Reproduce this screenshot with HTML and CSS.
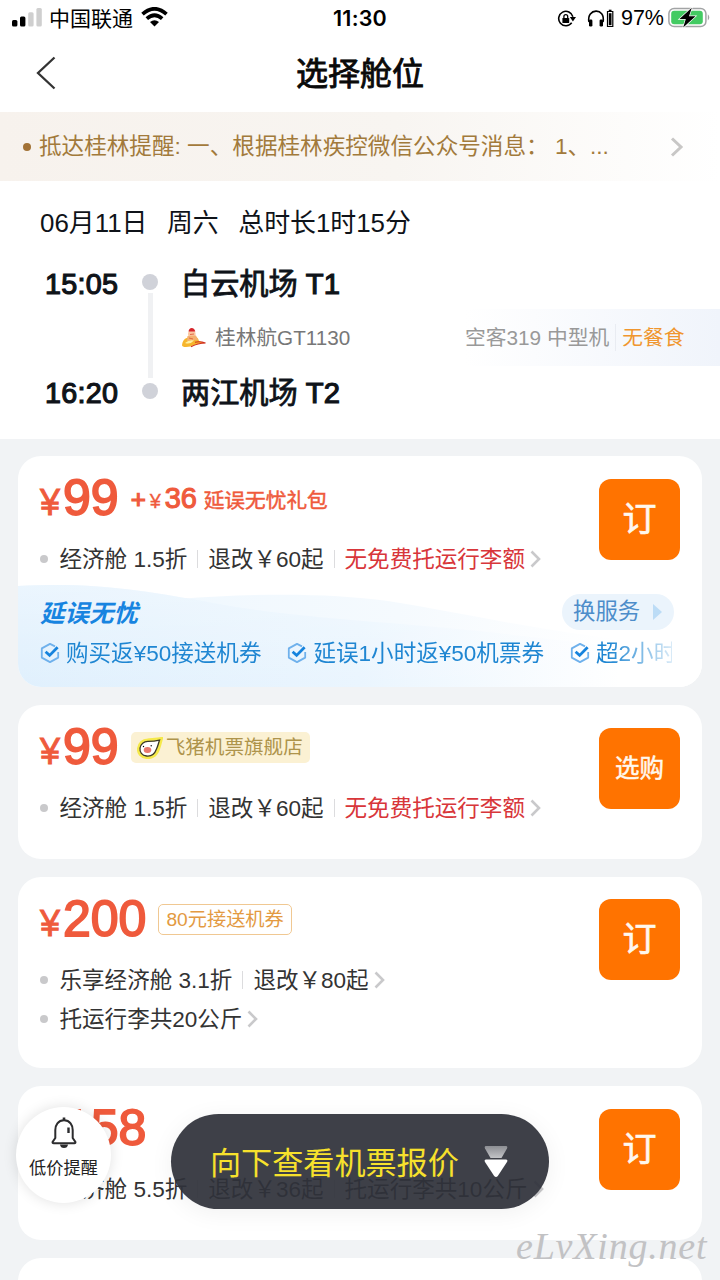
FILE: index.html
```html
<!DOCTYPE html>
<html lang="zh-CN">
<head>
<meta charset="utf-8">
<title>选择舱位</title>
<link rel="stylesheet" href="styles.css">
</head>
<body>
<svg width="0" height="0" class="defs">
  <symbol id="chev" viewBox="0 0 11 18"><path d="M1.5 1.5 L9 9 L1.5 16.5" fill="none" stroke="#c9c9cb" stroke-width="2.6"/></symbol>
  <symbol id="check" viewBox="0 0 20 20"><path d="M15 3.4 L10 .9 L1.8 5.4 V14.6 L10 19.1 L18.2 14.6 V9" fill="none" stroke="#6fb1ec" stroke-width="1.8" stroke-linejoin="round"/><path d="M5.6 8.8 L9.6 12.4 L17.6 4.2" fill="none" stroke="#1683dd" stroke-width="2.8"/></symbol>
</svg>
<div class="screen">
  <div class="status">
    <div class="status-left">
      <svg class="signal" width="31" height="19" viewBox="0 0 31 19"><rect x="0" y="12" width="5.4" height="6.6" rx="1.5"/><rect x="8" y="8.5" width="5.4" height="10" rx="1.5"/><rect x="16.2" y="4.3" width="5.4" height="14.3" rx="1.5" fill="#cfcfcf"/><rect x="24.4" y="0" width="5.4" height="18.6" rx="1.5" fill="#cfcfcf"/></svg>
      <span class="carrier">中国联通</span>
      <svg class="wifi" width="27" height="20" viewBox="0 0 27 20"><g fill="none" stroke="#000" stroke-width="3.7"><path d="M1.5 7.2 Q13.5 -3.6 25.5 7.2"/><path d="M5.8 11.7 Q13.5 4.9 21.2 11.7"/></g><path d="M13.5 19.5 L9 15.1 Q13.5 11.4 18 15.1 Z"/></svg>
    </div>
    <div class="clock">11:30</div>
    <div class="status-right">
      <svg width="20" height="18" viewBox="0 0 20 18"><path d="M14.7 12.8 A7.2 7.2 0 1 1 15.9 6.8" fill="none" stroke="#000" stroke-width="1.6"/><path d="M12.8 7 H19 L15.9 11.4 Z"/><rect x="5.4" y="7.9" width="6.8" height="5.2" rx=".7"/><path d="M6.9 8 V6.5 a1.9 1.9 0 0 1 3.8 0 V8" fill="none" stroke="#000" stroke-width="1.3"/></svg>
      <svg class="phones" width="27" height="19" viewBox="0 0 27 19"><path d="M2 13 C-1 -1 19 -2 16 13" fill="none" stroke="#000" stroke-width="1.6"/><rect x="2" y="10.5" width="3.4" height="7" rx="1.3"/><rect x="12.6" y="10.5" width="3.4" height="7" rx="1.3"/><path d="M20.5 2.5 H25.8 V17.5 H20.5 Z" fill="none" stroke="#000" stroke-width="1.2"/><rect x="21.8" y="4.2" width="2.7" height="12"/><rect x="21.8" y=".7" width="2.7" height="1.8"/></svg>
      <span class="pct">97%</span>
      <svg class="battery" width="43" height="22" viewBox="0 0 43 22"><rect x=".9" y="1.4" width="37" height="18.2" rx="5.2" fill="#fff" stroke="#a2a4a5" stroke-width="1.5"/><rect x="3.2" y="3.7" width="31.6" height="13.6" rx="3" fill="#43cb62"/><path d="M39.8 7.3 Q42.8 10.4 39.8 13.6 Z" fill="#a2a4a5"/><path d="M23.8 .8 L11.5 12 H17.8 L15.2 20.6 L27.5 9.2 H21 Z" fill="#000" stroke="#fff" stroke-width="1.4" paint-order="stroke"/></svg>
    </div>
  </div>

  <div class="nav">
    <svg class="back" width="20" height="34" viewBox="0 0 20 34"><path d="M18.5 1.5 L2 17 L18.5 32.5" fill="none" stroke="#333" stroke-width="2.3"/></svg>
    <h1 class="title">选择舱位</h1>
  </div>

  <div class="notice">
    <i class="notice-dot"></i>
    <span class="notice-text">抵达桂林提醒: 一、根据桂林疾控微信公众号消息：&nbsp;1、...</span>
    <svg width="14" height="20" viewBox="0 0 14 20"><path d="M2 1.5 L11 10 L2 18.5" fill="none" stroke="#c8c7c6" stroke-width="3"/></svg>
  </div>

  <div class="flight">
    <div class="date"><span>06月11日</span><span>周六</span><span>总时长1时15分</span></div>
    <div class="leg">
      <div class="times"><span>15:05</span><span>16:20</span></div>
      <div class="track"><i class="stop"></i><i class="line"></i><i class="stop"></i></div>
      <div class="places">
        <div class="airport">白云机场 <span class="terminal">T1</span></div>
        <div class="plane">
          <svg width="26" height="22" viewBox="0 0 26 22"><path d="M1 18 C2 11 6 11 8 10 C14 8 17 10 18 14 L24.5 16.5 C17 15 12 20 5 20 Q1 20 1 18Z" fill="#f6b52c"/><path d="M14 15.2 Q19 14 24.5 16 Q17 16 10 19.8" fill="none" stroke="#cf2d20" stroke-width="1.1"/><circle cx="10.8" cy="7" r="3.8" fill="#fbc6a0"/><path d="M7.5 4.6 Q8 1 10.7 1 Q13.5 1 14.3 4.6 Z" fill="#d6242a"/><path d="M6.5 9 L15 8.5 L17 13 L6 14 Z" fill="#f4b070"/><path d="M9 7.5 L13 7 M8 11 L12 12" stroke="#e0603a" stroke-width=".9"/><path d="M4 16 Q8 12.5 13 13.5 Q9 18 4 16Z" fill="#fff0a0"/></svg>
          <span class="flight-no">桂林航GT1130</span>
          <div class="meal"><span>空客319 中型机</span><i></i><em>无餐食</em></div>
        </div>
        <div class="airport">两江机场 <span class="terminal">T2</span></div>
      </div>
    </div>
  </div>

  <div class="list">
    <section class="card">
      <div class="offer">
        <div class="info">
          <div class="price"><span class="yen">¥</span><span class="amount">99</span>
            <span class="addon"><span class="plus">+</span><span class="small-yen">¥</span><span class="addon-num">36</span><span class="addon-name">延误无忧礼包</span></span></div>
          <div class="detail"><i class="dot"></i><span>经济舱 1.5折</span><i class="sep"></i><span>退改￥60起</span><i class="sep"></i><span class="red">无免费托运行李额</span><svg class="chev"><use href="#chev"/></svg></div>
        </div>
        <div class="book">订</div>
      </div>
      <div class="service">
        <svg class="waves" width="684" height="102" viewBox="0 0 684 102">
          <defs>
            <linearGradient id="w1" gradientUnits="userSpaceOnUse" x1="0" x2="684" y1="0" y2="0"><stop offset="0" stop-color="#e0f0fd"/><stop offset=".5" stop-color="#eaf5fe"/><stop offset=".88" stop-color="#fff"/></linearGradient>
            <linearGradient id="w2" gradientUnits="userSpaceOnUse" x1="160" x2="600" y1="0" y2="0"><stop offset="0" stop-color="#f0f8fe"/><stop offset=".5" stop-color="#f5fafe"/><stop offset="1" stop-color="#fff"/></linearGradient>
            <linearGradient id="w3" x1="0" x2="0" y1="0" y2="1"><stop offset="0" stop-color="#fff" stop-opacity=".35"/><stop offset="1" stop-color="#fff" stop-opacity="0"/></linearGradient>
          </defs>
          <path d="M160 14 C240 8 310 8 370 16 C460 30 540 52 684 62 V102 H160 Z" fill="url(#w2)"/>
          <path d="M0 1 C80 -3 130 6 200 19 C270 32 370 37 460 46 C550 56 610 64 684 68 V102 H0 Z" fill="url(#w1)"/>
          <path d="M0 1 C80 -3 130 6 200 19 C270 32 370 37 460 46 C550 56 610 64 684 68 V102 H0 Z" fill="url(#w3)"/>
        </svg>
        <div class="service-head"><span class="service-name">延误无忧</span><span class="swap">换服务<i></i></span></div>
        <div class="perks">
          <span class="perk"><svg><use href="#check"/></svg>购买返¥50接送机券</span>
          <span class="perk"><svg><use href="#check"/></svg>延误1小时返¥50机票券</span>
          <span class="perk"><svg><use href="#check"/></svg>超2小时</span>
        </div>
      </div>
    </section>

    <section class="card">
      <div class="offer">
        <div class="info">
          <div class="price"><span class="yen">¥</span><span class="amount">99</span>
            <span class="shop"><svg width="26" height="22" viewBox="0 0 26 22"><path d="M24.5 1.5 C23.5 5 23 8 21.5 12 C19 19.5 13.5 21 9.5 20.5 C4 20 1 16 1.5 11.5 C2 6.5 6 3 10.5 3 C15 2.5 20 2.5 24.5 1.5Z" fill="#fff" stroke="#f5e94a" stroke-width="3"/><path d="M22.5 3.2 C21.5 6 21 9 19.5 12 C17.5 17.5 13.5 19.5 9.5 19 C5 18.5 2.5 15 3 11.2 C3.5 7 7 4.3 11 4.4 C15 4.4 19 4 22.5 3.2Z" fill="#fff" stroke="#3c3a26" stroke-width="1.3"/><ellipse cx="10.5" cy="13" rx="3.8" ry="3" fill="#e9786d"/><circle cx="6.5" cy="9.5" r=".7"/><circle cx="14.2" cy="8.7" r=".7"/></svg>飞猪机票旗舰店</span></div>
          <div class="detail"><i class="dot"></i><span>经济舱 1.5折</span><i class="sep"></i><span>退改￥60起</span><i class="sep"></i><span class="red">无免费托运行李额</span><svg class="chev"><use href="#chev"/></svg></div>
        </div>
        <div class="book pick">选购</div>
      </div>
    </section>

    <section class="card tall">
      <div class="offer">
        <div class="info">
          <div class="price"><span class="yen">¥</span><span class="amount">200</span><span class="coupon">80元接送机券</span></div>
          <div class="detail"><i class="dot"></i><span>乐享经济舱 3.1折</span><i class="sep"></i><span>退改￥80起</span><svg class="chev"><use href="#chev"/></svg></div>
          <div class="detail"><i class="dot"></i><span>托运行李共20公斤</span><svg class="chev"><use href="#chev"/></svg></div>
        </div>
        <div class="book">订</div>
      </div>
    </section>

    <section class="card">
      <div class="offer">
        <div class="info">
          <div class="price"><span class="yen">¥</span><span class="amount">158</span></div>
          <div class="detail"><i class="dot"></i><span>经济舱 5.5折</span><i class="sep"></i><span>退改￥36起</span><i class="sep"></i><span>托运行李共10公斤</span><svg class="chev"><use href="#chev"/></svg></div>
        </div>
        <div class="book">订</div>
      </div>
    </section>
    <section class="card"></section>
  </div>

  <div class="alert">
    <svg width="26" height="32" viewBox="0 0 26 32"><path d="M13 3.3 C7 3.3 4.3 8 4.3 13 V21 L1.6 25 Q1.3 26.3 2.6 26.3 H23.4 Q24.7 26.3 24.4 25 L21.7 21 V13 C21.7 8 19 3.3 13 3.3Z" fill="none" stroke="#2c2c2e" stroke-width="2"/><path d="M17.5 10.5 V16" stroke="#2c2c2e" stroke-width="2.4"/><path d="M13 .5 V4" stroke="#2c2c2e" stroke-width="2.6"/><path d="M9 27.5 H17 Q16.5 31 13 31 Q9.5 31 9 27.5Z" fill="#2c2c2e"/></svg>
    <span>低价提醒</span>
  </div>
  <div class="more">
    <span>向下查看机票报价</span>
    <svg width="24" height="33" viewBox="0 0 24 33"><defs><linearGradient id="fade" x1="0" y1="0" x2="0" y2="1"><stop offset="0" stop-color="#8c8e93"/><stop offset="1" stop-color="#c2c3c6"/></linearGradient></defs><path d="M1.5 1 H22.5 Q24 1.5 23 3.5 L17.5 13 H6.5 L1 3.5 Q0 1.5 1.5 1Z" fill="url(#fade)"/><path d="M1.8 14.5 H22.2 Q24.2 15 23 17 L13.8 31 Q12 33 10.2 31 L1 17 Q-.2 15 1.8 14.5Z" fill="#fff"/></svg>
  </div>
  <div class="mark">eLvXing.net</div>
</div>
</body>
</html>
```
FILE: styles.css
```css
* { box-sizing: border-box; }
body {
  margin: 0;
  background: #f1f3f5;
  color: #333;
  font-family: "Liberation Sans", "Noto Sans CJK SC", sans-serif;
}
i, em { font-style: normal; }
.defs { position: absolute; }
svg { flex: none; display: block; }
.screen { position: relative; width: 720px; height: 1280px; overflow: hidden; }

.status {
  display: grid;
  grid-template-columns: 1fr auto 1fr;
  align-items: center;
  height: 37px;
  padding: 0 9px 0 12px;
  background: #fff;
  color: #000;
}
.status-left { display: flex; align-items: center; }
.signal { margin-right: 6px; margin-top: -2px; }
.carrier { font-size: 21px; line-height: 37px; }
.wifi { margin-left: 8px; margin-top: -3px; }
.clock { padding-right: 3px; font: 600 21.5px/37px Inter, sans-serif; letter-spacing: .2px; }
.status-right { display: flex; align-items: center; justify-content: flex-end; }
.phones { margin-left: 10px; }
.pct { margin-left: 7px; font-size: 21.5px; line-height: 37px; }
.battery { margin-left: 4px; margin-top: -2px; }

.nav {
  display: grid;
  grid-template-columns: 1fr auto 1fr;
  align-items: center;
  height: 75px;
  padding: 0 36px;
  background: #fff;
}
.back { margin-top: -3px; }
.title {
  margin: 0;
  font-size: 32px;
  line-height: 75px;
  font-weight: 400;
  color: #0a0a0a;
  -webkit-text-stroke: .9px #0a0a0a;
}

.notice {
  display: flex;
  align-items: center;
  height: 69px;
  padding: 0 36px 0 23px;
  background: linear-gradient(90deg, #f7f2ed, #f8f5f1 55%, #fff);
  color: #a27a3b;
  font-size: 22.6px;
}
.notice-dot { width: 8px; height: 8px; border-radius: 50%; background: #a27236; margin-right: 8px; }
.notice-text { flex: 1; padding-bottom: 4px; white-space: nowrap; }

.flight { height: 258px; padding-top: 22px; background: #fff; color: #0f1319; }
.date { display: flex; gap: 19.5px; padding-left: 40px; font-size: 25.9px; line-height: 40px; }
.leg { display: flex; margin-top: 21px; padding-left: 45px; }
.times {
  display: flex;
  flex-direction: column;
  justify-content: space-between;
  width: 97px;
  height: 149px;
  font-size: 28.7px;
  line-height: 40px;
  letter-spacing: .3px;
  -webkit-text-stroke: 1.2px currentColor;
}
.track { display: flex; flex-direction: column; align-items: center; width: 16px; padding-top: 10px; }
.stop { width: 16px; height: 16px; border-radius: 50%; background: #d0d2d9; }
.line { width: 5px; height: 85px; margin: 3px 0 5px; background: #f0f1f3; }
.places { flex: 1; padding-left: 23px; }
.airport { height: 40px; font-size: 29.2px; line-height: 40px; white-space: nowrap; -webkit-text-stroke: .8px currentColor; }
.terminal { -webkit-text-stroke: 1.2px currentColor; }
.plane { display: flex; align-items: center; height: 57px; margin: 5px 0 7px; }
.flight-no { margin-left: 8px; padding-bottom: 3px; font-size: 20.7px; color: #777; }
.meal {
  display: flex;
  align-items: center;
  height: 57px;
  width: 255px;
  margin-left: auto;
  background: linear-gradient(90deg, #fff, #f0f4fb);
  font-size: 20.75px;
  color: #999;
  white-space: nowrap;
}
.meal span, .meal em { padding-bottom: 3px; }
.meal i { width: 1px; height: 27px; margin: 0 6px; background: #e9ecf2; }
.meal em { color: #f0962f; }

.list { display: flex; flex-direction: column; gap: 18px; padding: 17px 18px 0; }
.card { height: 154px; background: #fff; border-radius: 23px; overflow: hidden; flex: none; }
.card:first-child { height: 231px; }
.card.tall { height: 191px; }
.offer { display: flex; justify-content: space-between; padding: 22px 22px 0; }
.price { display: flex; align-items: baseline; height: 61px; color: #ef5a3c; line-height: 40px; }
.yen { width: 23px; font-size: 36px; -webkit-text-stroke: .9px #ef5a3c; }
.amount { font-size: 50px; -webkit-text-stroke: 1.8px #ef5a3c; }
.addon { display: flex; align-items: baseline; align-self: flex-start; margin-left: 12px; }
.plus { width: 18px; font-size: 26px; -webkit-text-stroke: 1.2px #ef5a3c; }
.small-yen { width: 16px; padding-left: 1px; font-size: 20px; -webkit-text-stroke: .3px #ef5a3c; }
.addon-num { width: 39px; font-size: 29px; -webkit-text-stroke: 1.1px #ef5a3c; }
.addon-name { font-size: 20.7px; -webkit-text-stroke: .5px #ef5a3c; }
.detail { display: flex; align-items: center; height: 39px; font-size: 22.55px; white-space: nowrap; }
.detail span { padding-bottom: 3px; }
.info { padding-bottom: 1px; }
.dot { width: 8px; height: 8px; border-radius: 50%; background: #c9c9cb; margin-right: 11.5px; }
.sep { width: 1px; height: 18px; margin: 0 10px; background: #dcdcde; }
.red { color: #d8363a; }
.chev { width: 11px; height: 18px; margin-left: 5px; }
.book {
  width: 81px;
  height: 81px;
  margin-top: 1px;
  border-radius: 12px;
  background: #ff7300;
  color: #fff8ee;
  font-size: 34px;
  line-height: 80px;
  text-align: center;
  -webkit-text-stroke: .7px #fff8ee;
}
.pick { font-size: 24.5px; line-height: 82px; -webkit-text-stroke: .5px #fff8ee; }
.tall .book { margin-top: 0; }
.shop, .coupon { align-self: flex-start; margin-top: 5px; height: 31px; border-radius: 5px; }
.shop {
  display: flex;
  align-items: center;
  gap: 3px;
  margin-left: 12px;
  padding: 0 7px 0 6px;
  background: #fbf1d3;
  color: #ae944b;
  font-size: 19.6px;
  line-height: 31px;
}
.coupon { margin-left: 12px; padding: 0 7px; border: 1px solid #f0c892; color: #e39a42; font-size: 19.2px; line-height: 29px; }

.service { position: relative; height: 102px; margin-top: 6px; padding-top: 9px; color: #1f86d2; }
.waves { position: absolute; left: 0; top: 0; }
.service-head { position: relative; display: flex; align-items: center; justify-content: space-between; height: 36px; padding: 0 28px 0 22px; }
.service-name { padding-bottom: 2px; font-size: 24.5px; font-weight: 700; font-style: italic; color: #1784e0; }
.swap { display: flex; align-items: center; width: 112px; height: 36px; padding-left: 11px; border-radius: 18px; background: #ebf4fc; color: #4d8dca; font-size: 22.4px; line-height: 34px; }
.swap i { margin-left: 13px; border: solid transparent; border-width: 8px 0 8px 9px; border-left-color: #bcdcf6; }
.perks {
  position: relative;
  display: flex;
  gap: 26px;
  height: 46px;
  width: 632px;
  margin-left: 22px;
  overflow: hidden;
  font-size: 22.55px;
  line-height: 45px;
  white-space: nowrap;
  -webkit-mask-image: linear-gradient(90deg, #000 90%, transparent 102%);
  mask-image: linear-gradient(90deg, #000 90%, transparent 102%);
}
.perk { display: flex; flex: none; align-items: center; gap: 6px; }
.perk svg { width: 20px; height: 20px; }

.alert {
  position: absolute;
  left: 16px;
  top: 1107px;
  display: flex;
  flex-direction: column;
  align-items: center;
  width: 95px;
  height: 96px;
  padding-top: 10px;
  border-radius: 50%;
  background: #fff;
  box-shadow: 0 0 14px rgba(0, 0, 0, .12);
  color: #222;
  font-size: 17.2px;
  line-height: 38px;
}
.more {
  position: absolute;
  left: 171px;
  top: 1114px;
  display: flex;
  align-items: center;
  width: 378px;
  height: 95px;
  padding-left: 39px;
  border-radius: 48px;
  background: rgba(47, 50, 58, .93);
  box-shadow: 0 4px 24px rgba(0, 0, 0, .06);
  color: #f7e12c;
  font-size: 31.1px;
}
.more span { padding-bottom: 3px; }
.more svg { margin-left: 25px; }
.mark {
  position: absolute;
  left: 516px;
  top: 1224px;
  color: #c2c2c4;
  font: italic 38px/44px "Liberation Serif", serif;
  letter-spacing: .8px;
}
```
